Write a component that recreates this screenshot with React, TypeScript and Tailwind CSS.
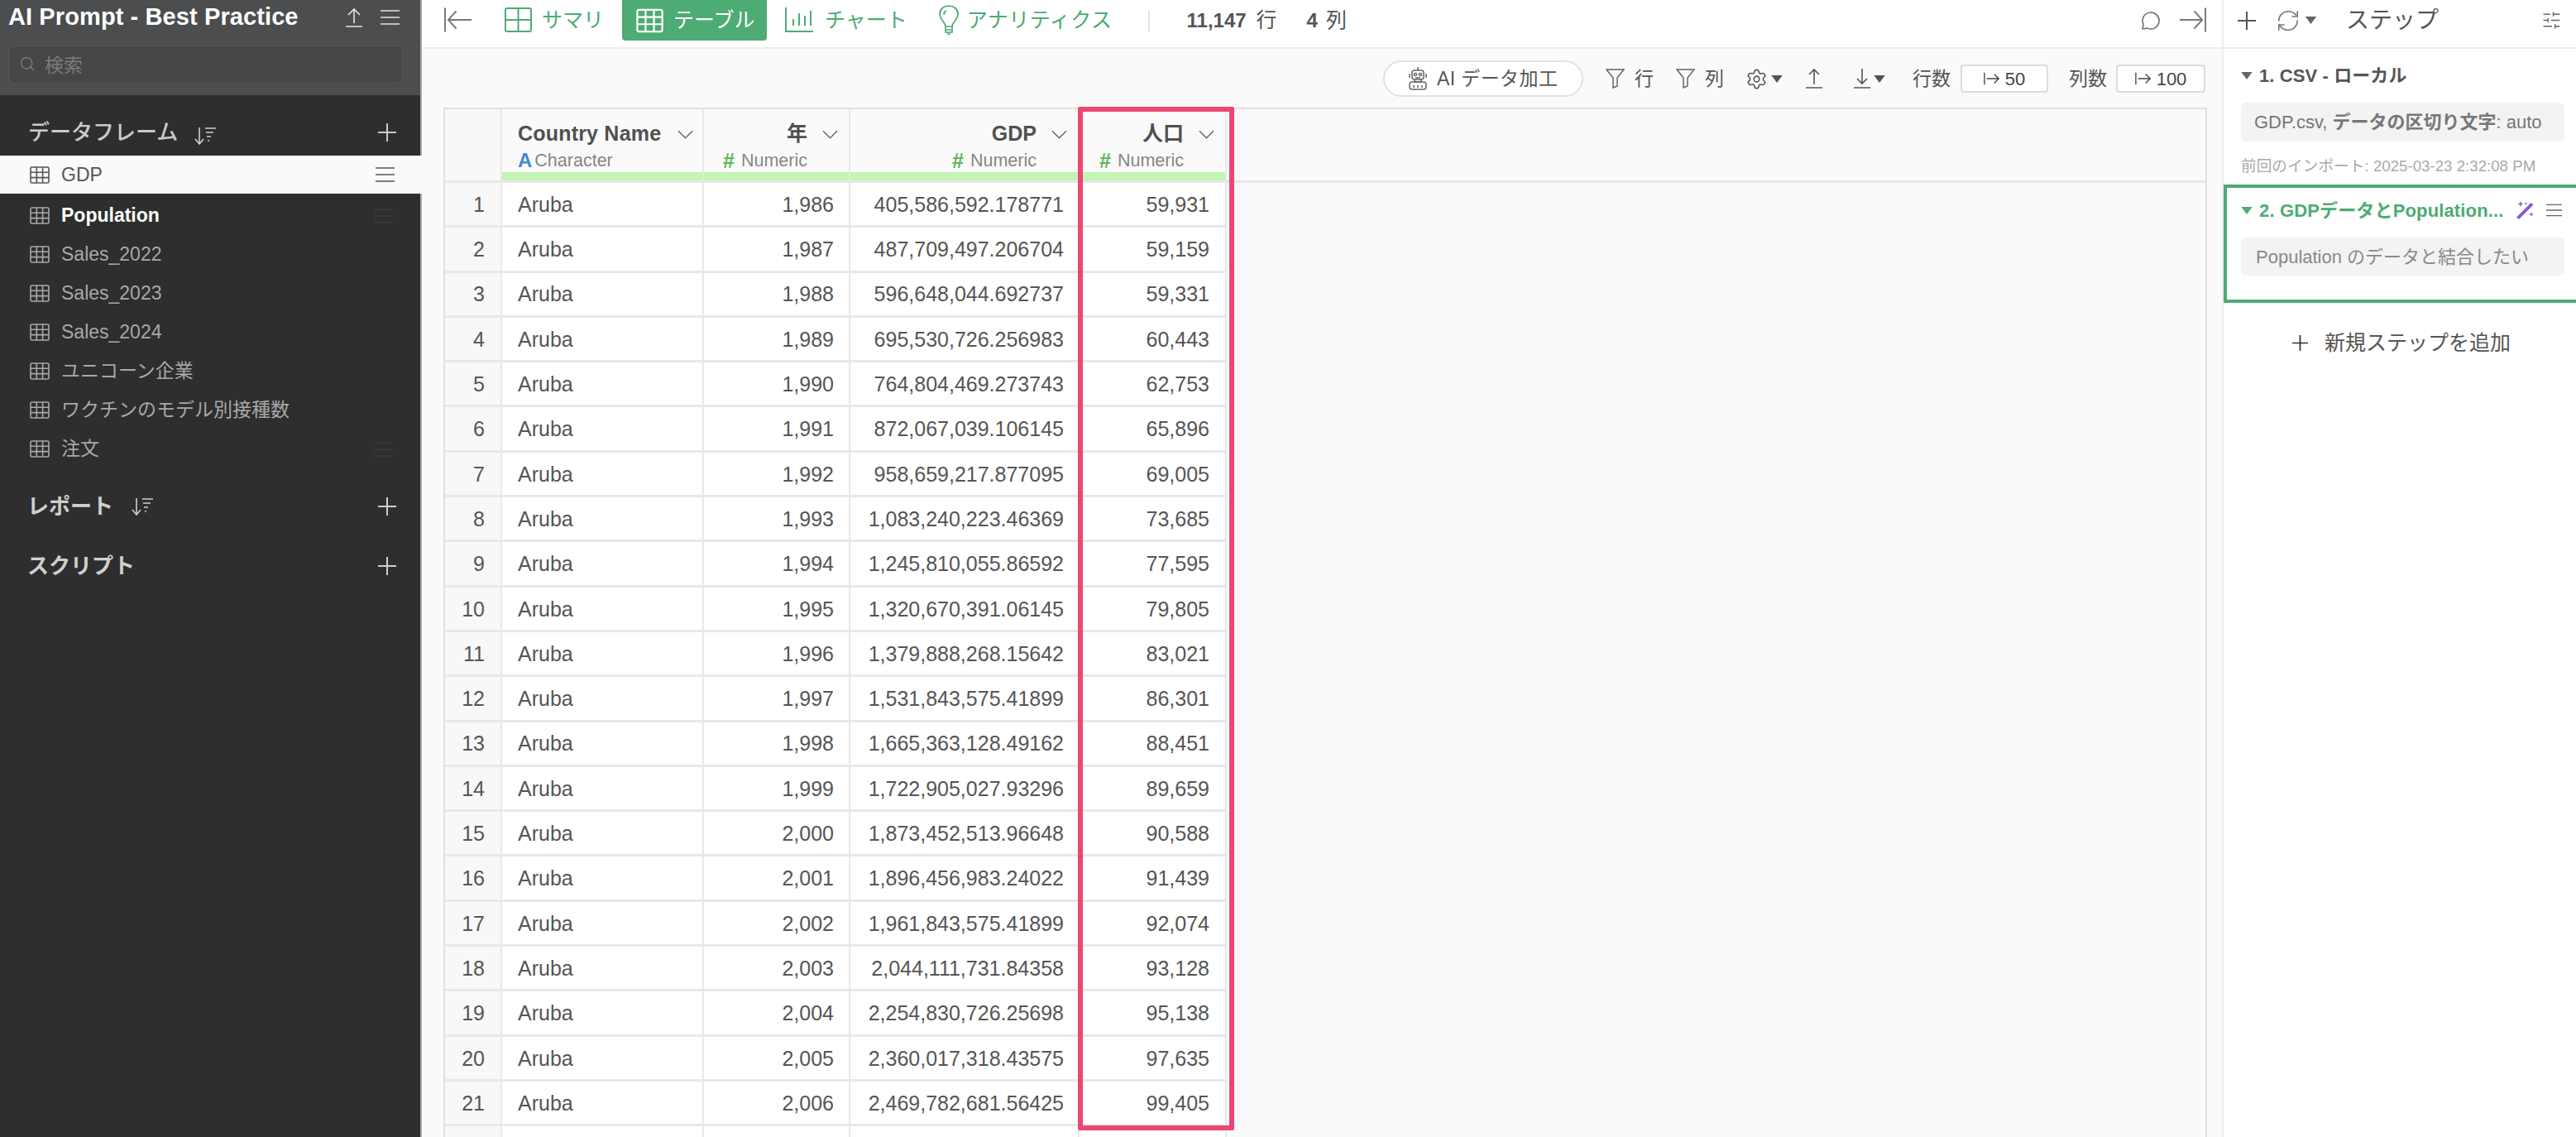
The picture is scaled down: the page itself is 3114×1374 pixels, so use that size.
import { MessageCircle, RefreshCw, Search, Settings, SlidersHorizontal } from "lucide-react"

const font = { fontFamily: '"Liberation Sans", "Noto Sans CJK JP", sans-serif' }

const frames = [
  { name: "Population", bold: true, handle: true },
  { name: "Sales_2022" },
  { name: "Sales_2023" },
  { name: "Sales_2024" },
  { name: "ユニコーン企業" },
  { name: "ワクチンのモデル別接種数" },
  { name: "注文", handle: true },
]

const rows = [
  ["1", "Aruba", "1,986", "405,586,592.178771", "59,931"],
  ["2", "Aruba", "1,987", "487,709,497.206704", "59,159"],
  ["3", "Aruba", "1,988", "596,648,044.692737", "59,331"],
  ["4", "Aruba", "1,989", "695,530,726.256983", "60,443"],
  ["5", "Aruba", "1,990", "764,804,469.273743", "62,753"],
  ["6", "Aruba", "1,991", "872,067,039.106145", "65,896"],
  ["7", "Aruba", "1,992", "958,659,217.877095", "69,005"],
  ["8", "Aruba", "1,993", "1,083,240,223.46369", "73,685"],
  ["9", "Aruba", "1,994", "1,245,810,055.86592", "77,595"],
  ["10", "Aruba", "1,995", "1,320,670,391.06145", "79,805"],
  ["11", "Aruba", "1,996", "1,379,888,268.15642", "83,021"],
  ["12", "Aruba", "1,997", "1,531,843,575.41899", "86,301"],
  ["13", "Aruba", "1,998", "1,665,363,128.49162", "88,451"],
  ["14", "Aruba", "1,999", "1,722,905,027.93296", "89,659"],
  ["15", "Aruba", "2,000", "1,873,452,513.96648", "90,588"],
  ["16", "Aruba", "2,001", "1,896,456,983.24022", "91,439"],
  ["17", "Aruba", "2,002", "1,961,843,575.41899", "92,074"],
  ["18", "Aruba", "2,003", "2,044,111,731.84358", "93,128"],
  ["19", "Aruba", "2,004", "2,254,830,726.25698", "95,138"],
  ["20", "Aruba", "2,005", "2,360,017,318.43575", "97,635"],
  ["21", "Aruba", "2,006", "2,469,782,681.56425", "99,405"],
  ["", "", "", "", ""],
]

function TableIcon({ className }: { className?: string }) {
  return (
    <svg viewBox="0 0 24 21" className={className} fill="none" stroke="currentColor" strokeWidth="1.6">
      <rect x="1" y="1" width="22" height="19" rx="1.5" />
      <path d="M1 7.3h22M1 13.6h22M8.3 1v19M15.6 1v19" />
    </svg>
  )
}

function Menu({ className }: { className?: string }) {
  return (
    <svg viewBox="0 0 23 18" className={className} fill="none" stroke="currentColor" strokeWidth="1.7">
      <path d="M0 1h23M0 9h23M0 17h23" />
    </svg>
  )
}

function Plus({ className }: { className?: string }) {
  return (
    <svg viewBox="0 0 22 22" className={className} fill="none" stroke="currentColor" strokeWidth="2">
      <path d="M11 0v22M0 11h22" />
    </svg>
  )
}

function SortIcon() {
  return (
    <svg viewBox="0 0 26 22" className="h-[22px] w-[26px] text-[#cfcfcf]" fill="none" stroke="currentColor" strokeWidth="1.6">
      <path d="M6 1v19M1 15l5 6 5-6M13 2h13M14 7h9M15 12h5M16 17h2" />
    </svg>
  )
}

function Caret({ className }: { className?: string }) {
  return (
    <svg viewBox="0 0 12 8" className={className} fill="currentColor">
      <path d="M0 0h12L6 8z" />
    </svg>
  )
}

function Chevron() {
  return (
    <svg viewBox="0 0 20 11" className="h-[11px] w-[19px] text-[#666]" fill="none" stroke="currentColor" strokeWidth="1.5">
      <path d="M1 1l9 9 9-9" />
    </svg>
  )
}

function Funnel() {
  return (
    <svg viewBox="0 0 23 24" className="h-[24px] w-[23px] text-[#666]" fill="none" stroke="currentColor" strokeWidth="1.5">
      <path d="M1 1h21l-8 10v10l-5 2V11z" />
    </svg>
  )
}

function Robot() {
  return (
    <svg viewBox="0 0 26 28" className="h-[28px] w-[26px] text-[#666]" fill="none" stroke="currentColor" strokeWidth="1.5">
      <path d="M13 0v4" />
      <rect x="6" y="4" width="14" height="11" rx="3" />
      <circle cx="10" cy="9" r="1.6" />
      <circle cx="16" cy="9" r="1.6" />
      <path d="M10 13h6M3 8v5M23 8v5M9 15v3h8v-3" />
      <rect x="3" y="18" width="20" height="9" rx="3" />
      <path d="M8 22v3M13 22v3M18 22v3" />
    </svg>
  )
}

function Bulb() {
  return (
    <svg viewBox="0 0 24 36" className="h-[36px] w-[24px]" fill="none" stroke="currentColor" strokeWidth="1.7">
      <path d="M8 26c0-5-7-8-7-15C1 5 6 1 12 1s11 4 11 10c0 7-7 10-7 15z" />
      <path d="M9 7c-2 1-3 3-3 5M8 26v7h8v-7M8 30h8M10 35h4" />
    </svg>
  )
}

function Wand() {
  return (
    <svg viewBox="0 0 24 24" className="h-[24px] w-[24px] text-[#8a5cc8]" fill="currentColor">
      <path d="M1 20.5L18.5 3l3 2.5L4 23z" />
      <path d="M6 1l1 2.5L9.5 4.500 7 5.500 6 8 5 5.500 2.500 4.500 5 3.500zM19 14l.8 2.200 2.200.8-2.200.8L19 20l-.8-2.200-2.200-.8 2.200-.8zM12.500 2l.6 1.400 1.400.6-1.400.6-.6 1.400-.6-1.400L10.500 4l1.400-.6z" />
    </svg>
  )
}

function LimitBox({ value, className }: { value: string; className: string }) {
  return (
    <div className={`flex h-[34px] items-center justify-center gap-[6px] rounded-[4px] border-2 border-[#dcdcdc] bg-white text-[22px] text-[#444] ${className}`}>
      <svg viewBox="0 0 22 16" className="h-[16px] w-[20px]" fill="none" stroke="currentColor" strokeWidth="1.5">
        <path d="M1 0v16M4 8h16M14 2l6 6-6 6" />
      </svg>
      {value}
    </div>
  )
}

function Sidebar() {
  return (
    <aside className="flex h-full w-[510px] shrink-0 flex-col border-r-2 border-[#a9a9a9] bg-[#2d2e2d]">
      <div className="h-[115px] shrink-0 bg-[#4c4d4f] pl-[10px] pr-[25px]">
        <div className="flex h-[42px] items-center">
          <div className="flex-1 text-[29px] font-bold tracking-[0.1px] text-white">AI Prompt - Best Practice</div>
          <svg viewBox="0 0 20 23" className="mr-[22px] h-[23px] w-[20px] text-[#e4e4e4]" fill="none" stroke="currentColor" strokeWidth="1.6">
            <path d="M10 18V1M3 8l7-7 7 7M0 22h20" />
          </svg>
          <Menu className="h-[18px] w-[23px] text-[#e4e4e4]" />
        </div>
        <div className="mt-[13px] flex h-[46px] w-[477px] items-center rounded-[8px] border border-[#555] bg-[#464646] pb-[2px] pl-[12px] text-[23px] text-[#7b7b7b]">
          <Search className="mr-[11px] h-[20px] w-[20px]" strokeWidth={1.7} />
          <span className="translate-y-[2px]">検索</span>
        </div>
      </div>
      <div className="flex h-[73px] shrink-0 items-end pb-[8px] pl-[34px] pr-[29px] text-[26px] font-medium text-[#cacaca]">
        <span>データフレーム</span>
        <span className="mb-[5px] ml-[20px] flex-1"><SortIcon /></span>
        <Plus className="mb-[9px] h-[22px] w-[22px]" />
      </div>
      <div className="mr-[-2px] flex h-[46px] shrink-0 items-center bg-[#fafafa] pl-[36px] pr-[33px] text-[23px] text-[#555]">
        <TableIcon className="h-[21px] w-[24px]" />
        <span className="ml-[14px] flex-1">GDP</span>
        <Menu className="h-[18px] w-[23px]" />
      </div>
      <div className="mt-[3px] shrink-0">
        {frames.map((f) => (
          <div key={f.name} className="flex h-[47px] items-center pl-[36px] pr-[33px] text-[23px]">
            <TableIcon className="h-[21px] w-[24px] text-[#a8a8a8]" />
            <span className={`ml-[14px] flex-1 ${f.bold ? "font-bold text-white" : "text-[#a8a8a8]"}`}>{f.name}</span>
            {f.handle && <Menu className="h-[18px] w-[23px] text-[#3a3b3a]" />}
          </div>
        ))}
      </div>
      <div className="mt-[26px] flex h-[40px] shrink-0 items-center pl-[33px] pr-[29px] text-[26px] font-bold text-[#cfcfcf]">
        <span>レポート</span>
        <span className="ml-[22px] flex-1"><SortIcon /></span>
        <Plus className="h-[22px] w-[22px]" />
      </div>
      <div className="mt-[32px] flex h-[40px] shrink-0 items-center pl-[33px] pr-[29px] text-[26px] font-bold text-[#cfcfcf]">
        <span className="flex-1">スクリプト</span>
        <Plus className="h-[22px] w-[22px]" />
      </div>
    </aside>
  )
}

function TopBar() {
  return (
    <div className="flex h-[59px] shrink-0 items-start border-b-2 border-[#ececec] bg-white text-[25px] text-[#4dab74]">
      <svg viewBox="0 0 34 30" className="ml-[27px] mt-[9px] h-[30px] w-[33px] text-[#777]" fill="none" stroke="currentColor" strokeWidth="2">
        <path d="M1 0v30M34 15H5M15 4L5 15l10 11" />
      </svg>
      <div className="ml-[40px] mt-[9px] flex items-center">
        <svg viewBox="0 0 33 30" className="h-[30px] w-[33px]" fill="none" stroke="currentColor" strokeWidth="2">
          <rect x="1" y="1" width="31" height="28" rx="2" />
          <path d="M1 15h31M16.5 1v28" />
        </svg>
        <span className="ml-[12px] leading-[30px]">サマリ</span>
      </div>
      <div className="ml-[22px] flex h-[49px] w-[175px] items-center rounded-b-[4px] bg-[#4dab74] pl-[17px] text-white">
        <TableIcon className="h-[30px] w-[33px]" />
        <span className="ml-[12px]">テーブル</span>
      </div>
      <div className="ml-[22px] mt-[9px] flex items-center">
        <svg viewBox="0 0 34 30" className="h-[30px] w-[34px]" fill="none" stroke="currentColor" strokeWidth="2">
          <path d="M1 0v29h33M10 22v-8M17 22V7M24 22V10M31 22V4" />
        </svg>
        <span className="ml-[14px] leading-[30px]">チャート</span>
      </div>
      <div className="ml-[38px] mt-[6px] flex items-center">
        <Bulb />
        <span className="ml-[10px] tracking-[0.5px] leading-[30px]">アナリティクス</span>
      </div>
      <div className="ml-[43px] mt-[12px] h-[26px] w-[2px] bg-[#e5e5e5]" />
      <div className="ml-[45px] mt-[9px] leading-[30px] text-[#555]">
        <span className="mr-[5px] text-[24px] font-bold">11,147</span> 行
      </div>
      <div className="ml-[36px] mt-[9px] leading-[30px] text-[#555]">
        <span className="mr-[3px] text-[24px] font-bold">4</span> 列
      </div>
      <div className="flex-1" />
      <MessageCircle className="mt-[13px] h-[24px] w-[24px] text-[#666]" strokeWidth={1.5} />
      <svg viewBox="0 0 33 30" className="ml-[23px] mr-[19px] mt-[9px] h-[30px] w-[32px] text-[#777]" fill="none" stroke="currentColor" strokeWidth="2">
        <path d="M32 0v30M0 15h28M18 4l10 11-10 11" />
      </svg>
    </div>
  )
}

function Toolbar() {
  return (
    <div className="flex h-[71px] shrink-0 items-center bg-[#fafafa] pt-[1px] text-[23px] text-[#555]">
      <div className="ml-[1162px] flex h-[44px] w-[242px] items-center rounded-full border-2 border-[#e2e2e2] bg-white pl-[27px] text-[23px]">
        <Robot />
        <span className="ml-[10px] tracking-[0.4px]">AI データ加工</span>
      </div>
      <div className="ml-[27px] flex w-[85px] items-center gap-[12px]"><Funnel />行</div>
      <div className="flex w-[84px] items-center gap-[12px]"><Funnel />列</div>
      <Settings className="h-[27px] w-[27px]" strokeWidth={1.4} />
      <Caret className="ml-[4px] h-[9px] w-[14px]" />
      <svg viewBox="0 0 20 24" className="ml-[28px] h-[24px] w-[20px]" fill="none" stroke="currentColor" strokeWidth="1.6">
        <path d="M10 19V1M4 7l6-6 6 6M0 23h20" />
      </svg>
      <svg viewBox="0 0 20 24" className="ml-[38px] h-[24px] w-[20px]" fill="none" stroke="currentColor" strokeWidth="1.6">
        <path d="M10 0v18M4 12l6 6 6-6M0 23h20" />
      </svg>
      <Caret className="ml-[4px] h-[9px] w-[14px]" />
      <span className="ml-[33px]">行数</span>
      <LimitBox value="50" className="ml-[12px] w-[106px]" />
      <span className="ml-[25px]">列数</span>
      <LimitBox value="100" className="ml-[11px] w-[108px]" />
    </div>
  )
}

function HeaderCell({ name, type, className, right }: { name: string; type: string; className: string; right?: boolean }) {
  return (
    <div className={`flex h-full shrink-0 flex-col border-r-2 border-[#e8e8e8] bg-[#fafafa] ${className}`}>
      <div className={`flex flex-1 flex-col pt-[16px] ${right ? "items-end" : "pl-[19px]"}`}>
        <div className={`flex h-[28px] items-center text-[25px] font-bold text-[#505050] ${right ? "pr-[13px]" : ""}`}>
          <span className={right ? "mr-[18px]" : "mr-[20px] tracking-[0.2px]"}>{name}</span>
          <Chevron />
        </div>
        <div className={`mt-[4px] flex h-[28px] items-center text-[21.5px] text-[#868686] ${right ? "pr-[50px]" : ""}`}>
          {type === "Numeric" ? (
            <span className="mr-[8px] text-[25px] font-bold leading-none text-[#5cb45c]">#</span>
          ) : (
            <span className="mr-[3px] text-[24px] font-bold leading-none text-[#3f88d4]">A</span>
          )}
          {type}
        </div>
      </div>
      <div className="h-[11px] bg-[#c3f5b5]" />
    </div>
  )
}

function DataTable() {
  return (
    <div className="relative ml-[26px] mr-[18px] flex-1 border-x-2 border-t-2 border-[#e0e0e0] bg-[#fafafa]">
      <div className="flex h-[89px] border-b-[3px] border-[#e8e8e8]">
        <div className="h-full w-[69px] shrink-0 border-r-2 border-[#e8e8e8] bg-[#f8f8f8]" />
        <HeaderCell name="Country Name" type="Character" className="w-[244px]" />
        <HeaderCell name="年" type="Numeric" className="w-[177px]" right />
        <HeaderCell name="GDP" type="Numeric" className="w-[277px]" right />
        <HeaderCell name="人口" type="Numeric" className="w-[178px]" right />
      </div>
      {rows.map((r, i) => (
        <div key={i} className="flex h-[54.3px] w-[945px] border-b-[3px] border-[#e8e8e8] bg-white text-[25px] text-[#555]">
          <div className="flex w-[69px] shrink-0 items-center justify-end border-r-2 border-[#e8e8e8] bg-[#f8f8f8] pr-[19px] pt-[2px]">{r[0]}</div>
          <div className="flex w-[244px] shrink-0 items-center border-r-2 border-[#e8e8e8] pl-[19px] pt-[2px]">{r[1]}</div>
          <div className="flex w-[177px] shrink-0 items-center justify-end border-r-2 border-[#e8e8e8] pr-[18px] pt-[2px]">{r[2]}</div>
          <div className="flex w-[277px] shrink-0 items-center justify-end border-r-2 border-[#e8e8e8] pr-[17px] pt-[2px]">{r[3]}</div>
          <div className="flex w-[178px] shrink-0 items-center justify-end border-r-2 border-[#e8e8e8] pr-[19px] pt-[2px]">{r[4]}</div>
        </div>
      ))}
      {/* highlight around the population column */}
      <div className="absolute left-[765px] top-[-3px] h-[1237px] w-[189px] rounded-[2px] border-[6px] border-[#ee4672]" />
    </div>
  )
}

function StepsPanel() {
  return (
    <aside className="flex h-full w-[428px] shrink-0 flex-col border-l-2 border-[#ececec] bg-white">
      <div className="flex h-[59px] shrink-0 items-center border-b-2 border-[#ececec] pb-[8px] pl-[17px] text-[28px] text-[#555]">
        <Plus className="h-[22px] w-[22px]" />
        <RefreshCw className="ml-[24px] h-[30px] w-[30px] text-[#777]" strokeWidth={1.3} />
        <Caret className="ml-[5px] h-[9px] w-[15px] text-[#666]" />
        <span className="ml-[35px]">ステップ</span>
        <SlidersHorizontal className="ml-[124px] h-[25px] w-[25px] text-[#666]" strokeWidth={1.4} />
      </div>
      <div className="shrink-0 px-[21px] pt-[20px]">
        <div className="flex h-[24px] items-center text-[22px] font-bold text-[#555]">
          <Caret className="mr-[8px] h-[9px] w-[14px] text-[#666]" />
          <span className="tracking-[0.1px]">1. CSV - ローカル</span>
        </div>
        <div className="mt-[21px] flex h-[47px] w-[391px] items-center rounded-[6px] bg-[#f3f3f3] pl-[16px] text-[22px] text-[#777]">
          GDP.csv,&nbsp;<span className="font-bold">データの区切り文字</span>: auto
        </div>
        <div className="mt-[16px] h-[24px] text-[18.7px] text-[#aaa]">前回のインポート: 2025-03-23 2:32:08 PM</div>
      </div>
      <div className="mt-[12px] h-[143px] shrink-0 border-y-4 border-l-4 border-[#4dab74] pl-[17px] pt-[15px]">
        <div className="flex h-[24px] items-center text-[22px] font-bold text-[#4dab74]">
          <Caret className="mr-[8px] h-[9px] w-[14px]" />
          <span className="w-[297px] whitespace-nowrap tracking-[0.15px]">2. GDPデータとPopulation...</span>
          <span className="ml-[13px]"><Wand /></span>
          <Menu className="ml-[13px] h-[16px] w-[19px] text-[#666]" />
        </div>
        <div className="mt-[21px] flex h-[46px] w-[391px] items-center rounded-[6px] bg-[#f3f3f3] pl-[18px] text-[22px] text-[#888]">
          Population のデータと結合したい
        </div>
      </div>
      <div className="mt-[30px] flex shrink-0 items-center pl-[83px] text-[25px] text-[#555]">
        <Plus className="mr-[20px] h-[19px] w-[19px] text-[#333]" />
        新規ステップを追加
      </div>
    </aside>
  )
}

export default function App() {
  return (
    <div className="flex h-screen w-full overflow-hidden bg-[#fafafa]" style={font}>
      <Sidebar />
      <main className="flex h-full min-w-0 flex-1 flex-col">
        <TopBar />
        <Toolbar />
        <DataTable />
      </main>
      <StepsPanel />
    </div>
  )
}
